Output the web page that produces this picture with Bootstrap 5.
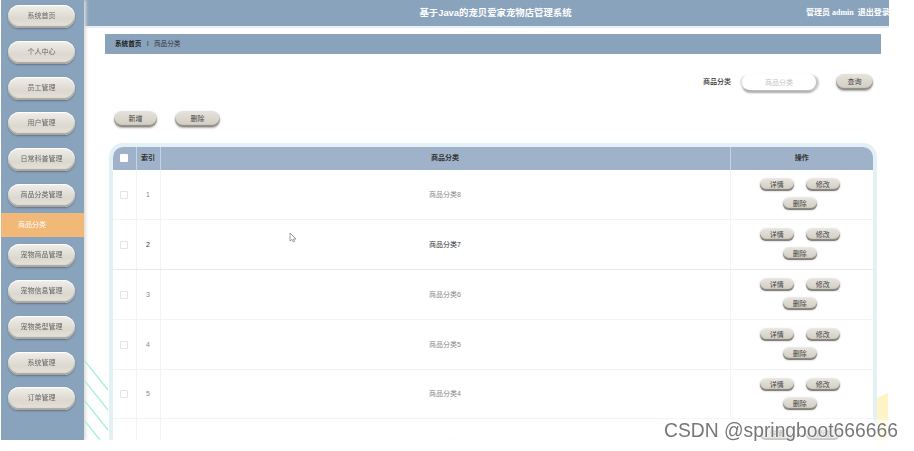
<!DOCTYPE html>
<html lang="zh-CN">
<head>
  <meta charset="UTF-8" />
  <title>商品分类</title>
  <link href="https://cdn.jsdelivr.net/npm/bootstrap@5.3.0/dist/css/bootstrap.min.css" rel="stylesheet" />
  <style>
    html, body { height: 451px; overflow: hidden; background: #fff; }
    body { font-family: "Liberation Sans", "Noto Sans CJK SC", sans-serif; font-size: 7px; color: #555; }
    .shot { width: 888px; height: 440px; margin-left: 1px; overflow: hidden; filter: blur(.35px); }
    .side-bar { width: 83px; flex: none; background: #89a3bd; padding: 5px 2px 0 0; box-shadow: 2px 0 3px #ddd; z-index: 2; }
    .side-btn { display: block; width: 67px; height: 23px; line-height: 22px; margin: 0 auto 12.75px; border-radius: 12px; text-align: center; color: #666; font-size: 7px;
      background: linear-gradient(#f0eee8, #dcd8cf 60%, #e6e3dc); box-shadow: inset 0 -2px 1px #a9a69f, 0 1px 2px #5f7288, inset 0 1px 1px #fff; }
    .side-active { height: 24px; line-height: 23px; margin: -6.75px -2px 7.5px 0; padding-left: 17px; background: #f2b878; color: #fff; font-size: 7px; }
    .top-bar { height: 26px; flex: none; background: #89a3bd; color: #fff; font-weight: 700; }
    .top-title { flex-grow: 1; text-align: center; padding-left: 101px; font-size: 9.4px; }
    .top-user { width: 83px; flex: none; white-space: nowrap; overflow: hidden; font-size: 8px; font-family: "Liberation Serif", "Noto Sans CJK SC", serif; }
    .top-line { height: 2px; background: #e6f0f6; flex: none; }
    .main-area { position: relative; flex-grow: 1; min-width: 0; overflow: hidden; background: #fff; }
    .deco-lines { position: absolute; left: 0; top: 0; }
    .crumb-bar { height: 20px; margin: 6px 8px 0 21px; padding-left: 10px; background: #89a3bd; color: #333; font-size: 6.6px; position: relative; gap: 3px; }
    .crumb-bar b { color: #222; font-weight: 600; }
    .search-row { height: 16px; margin: 20px 16px 0 0; position: relative; }
    .search-label { color: #333; font-size: 7px; margin-right: 11px; font-weight: 500; }
    .search-box { width: 74px; height: 16px; border: 0; outline: 0; border-radius: 9px; margin-right: 20px; text-align: center; font-size: 7px; color: #bbb;
      background: #fff; box-shadow: -3px 0 1px -1px #e2e0db, 3px 1px 2px #c8c5bf, 0 3px 2px #aaa; padding: 0; }
    .search-box::placeholder { color: #c4c4c4; }
    .pill-btn { display: inline-block; border: 0; padding: 0; text-align: center; color: #444; font-size: 7px; width: 43px; height: 16px; line-height: 14px; border-radius: 9px;
      background: linear-gradient(#e6e3dc, #cfcbc2); box-shadow: inset 0 -2px 1px #8f8c86, 0 1px 2px #aaa; }
    .pill-query { width: 37px; }
    .pill-wide { width: 45px; }
    .tool-row { height: 16px; margin: 21px 0 0 30px; position: relative; gap: 18px; }
    .table-box { position: relative; margin: 16px 0 0 25px; width: 768px; border: 4px solid #e3f0f6; border-bottom: 0; border-radius: 14px 14px 0 0; background: #fff; overflow: hidden; }
    .data-table { table-layout: fixed; width: 760px; margin: 0; border-collapse: collapse; font-size: 7px; }
    .col-tick { width: 23px; }
    .col-idx { width: 24px; }
    .col-name { width: 570px; }
    .col-ops { width: 143px; }
    .data-table th { height: 23px; padding: 0; background: #9fb2c9; color: #333; font-weight: 600; text-align: center; vertical-align: middle; border-right: 1px solid #c6d3e0; border-bottom: 0; }
    .data-table th:last-child { border-right: 0; }
    .data-table td { height: 49.8px; padding: 1px 0 0; text-align: center; vertical-align: middle; color: #888; border-right: 1px solid #f1f3f4; border-bottom: 1px solid #f1f3f4; }
    .data-table td:last-child { border-right: 0; padding-top: 0; }
    .data-table tr.dark-row td { color: #333; border-bottom-color: #e8eaeb; }
    .tick { display: inline-block; width: 8px; height: 8px; border: 1px solid #e4e4e4; border-radius: 1px; background: #fff; vertical-align: middle; }
    .tick-head { border: 0; }
    .row-ops { width: 90px; margin: 0 auto; gap: 7px 12px; position: relative; left: -2px; }
    .row-ops .pill-btn { width: 34px; height: 12px; line-height: 10px; font-size: 7px; border-radius: 7px; box-shadow: inset 0 -2px 1px #85827c, 0 0 2px #aaa; }
    .pointer-mark { position: absolute; left: 205px; top: 204px; }
    .mark-text { position: absolute; left: 664px; top: 420px; font-size: 19.3px; line-height: 22px; color: #777; white-space: nowrap; z-index: 5;
      font-family: "Liberation Sans", sans-serif; text-shadow: 0 0 2px #fff, 0 0 2px #fff; background: rgba(255,255,255,.55); box-shadow: 0 0 6px rgba(255,255,255,.6); }
  </style>
</head>
<body class="position-relative">
  <div class="shot d-flex">
    <div class="side-bar">
      <a class="side-btn text-decoration-none">系统首页</a>
      <a class="side-btn text-decoration-none">个人中心</a>
      <a class="side-btn text-decoration-none">员工管理</a>
      <a class="side-btn text-decoration-none">用户管理</a>
      <a class="side-btn text-decoration-none">日常科普管理</a>
      <a class="side-btn text-decoration-none">商品分类管理</a>
      <div class="side-active">商品分类</div>
      <a class="side-btn text-decoration-none">宠物商品管理</a>
      <a class="side-btn text-decoration-none">宠物信息管理</a>
      <a class="side-btn text-decoration-none">宠物类型管理</a>
      <a class="side-btn text-decoration-none">系统管理</a>
      <a class="side-btn text-decoration-none">订单管理</a>
    </div>
    <div class="d-flex flex-column flex-grow-1 overflow-hidden">
      <div class="top-bar d-flex align-items-center">
        <div class="top-title">基于Java的宠贝爱家宠物店管理系统</div>
        <div class="top-user">管理员 admin &nbsp;退出登录</div>
      </div>
      <div class="top-line"></div>
      <div class="main-area">
        <!-- background decoration, corners only -->
        <svg class="deco-lines" width="804" height="412" aria-hidden="true">
          <g stroke="#a6f0de" stroke-width="1.4">
            <line x1="0" y1="332" x2="24" y2="362"/>
            <line x1="0" y1="352" x2="24" y2="382"/>
            <line x1="0" y1="372" x2="24" y2="402"/>
            <line x1="0" y1="392" x2="16" y2="412"/>
          </g>
          <path d="M793 370 L804 365 V412 H793 Z" fill="#fdf3c4"/>
        </svg>
        <div class="crumb-bar d-flex align-items-center"><b>系统首页</b><span>Ⅰ</span><span>商品分类</span></div>
        <div class="search-row d-flex justify-content-end align-items-center">
          <span class="search-label">商品分类</span>
          <input class="search-box" placeholder="商品分类" />
          <button class="pill-btn pill-query">查询</button>
        </div>
        <div class="tool-row d-flex">
          <button class="pill-btn">新增</button>
          <button class="pill-btn pill-wide">删除</button>
        </div>
        <div class="table-box">
          <table class="data-table">
            <colgroup><col class="col-tick"><col class="col-idx"><col class="col-name"><col class="col-ops"></colgroup>
            <thead>
              <tr><th><span class="tick tick-head"></span></th><th>索引</th><th>商品分类</th><th>操作</th></tr>
            </thead>
            <tbody id="rows"></tbody>
          </table>
        </div>
        <svg class="pointer-mark" width="8" height="11" viewBox="0 0 8 11" aria-hidden="true"><path d="M1 1 V9 L3 7.4 L4.4 10 L5.6 9.4 L4.4 7 H7 Z" fill="#fff" stroke="#777" stroke-width=".7"/></svg>
      </div>
    </div>
  </div>
  <div class="mark-text">CSDN @springboot666666</div>

  <script>
    const rows = [
      [1, "商品分类8"], [2, "商品分类7"], [3, "商品分类6"],
      [4, "商品分类5"], [5, "商品分类4"], [6, "商品分类3"]
    ];
    document.getElementById("rows").innerHTML = rows.map(r => `
      <tr class="${r[0] === 2 ? "dark-row" : ""}">
        <td><span class="tick"></span></td>
        <td>${r[0]}</td>
        <td>${r[1]}</td>
        <td>
          <div class="row-ops d-flex flex-wrap justify-content-center">
            <button class="pill-btn">详情</button><button class="pill-btn">修改</button><button class="pill-btn">删除</button>
          </div>
        </td>
      </tr>`).join("");
  </script>
  <script src="https://cdn.jsdelivr.net/npm/bootstrap@5.3.0/dist/js/bootstrap.bundle.min.js"></script>
</body>
</html>
